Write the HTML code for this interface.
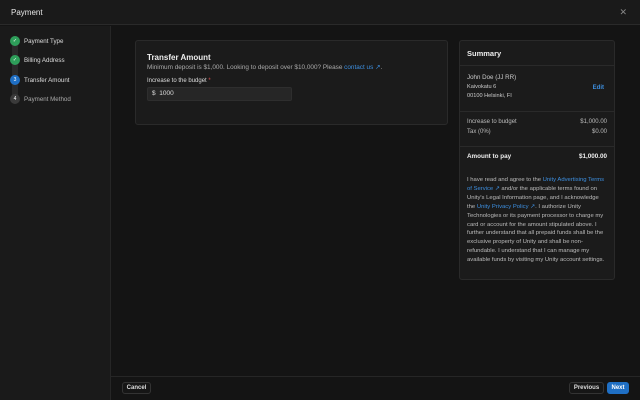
<html><head><style>
*{margin:0;padding:0;box-sizing:border-box}
body{width:640px;height:400px;background:#141414;font-family:"Liberation Sans",sans-serif;color:#ddd;position:relative;overflow:hidden;font-size:7px}
.hdr{position:absolute;left:0;top:0;width:640px;height:25px;background:#1a1a1a;border-bottom:1px solid #2a2a2a}
.hdr .t{position:absolute;left:11px;top:8px;font-size:8px;color:#e6e6e6}
.hdr .x{position:absolute;right:13px;top:7px;font-size:9px;color:#888}
.side{position:absolute;left:0;top:26px;width:111px;height:374px;background:#1a1a1a;border-right:1px solid #262626}
.rail{position:absolute;left:12px;top:38px;width:6px;height:64px;background:#2a2a2a;border-radius:3px}
.st{position:absolute;left:10px;width:100px;height:10px}
.st .c{position:absolute;left:0;top:0;width:10px;height:10px;border-radius:50%;font-size:5px;text-align:center;line-height:10px;color:#fff}
.st .l{position:absolute;left:14px;top:2px;font-size:6.2px;color:#ddd}
.card{position:absolute;background:#1b1b1b;border:1px solid #2a2a2a;border-radius:3px}
.a{color:#3d8fe0}
.foot{position:absolute;left:111px;top:376px;width:529px;height:1px;background:#262626}
.btn{position:absolute;top:382px;height:12px;border:1px solid #333;border-radius:3px;font-size:6px;font-weight:bold;line-height:10px;text-align:center;color:#ddd;background:#161616}
.row{position:absolute;left:7px;right:7px;font-size:6px;color:#bbb}
.row span{float:right}
.dv{position:absolute;left:0;right:0;height:1px;background:#2a2a2a}
</style></head><body>
<div class="hdr"><div class="t">Payment</div><div class="x">✕</div></div>
<div class="side"></div>
<div class="rail"></div>
<div class="st" style="top:36px"><div class="c" style="background:#2e9e5a">✓</div><div class="l">Payment Type</div></div>
<div class="st" style="top:55px"><div class="c" style="background:#2e9e5a">✓</div><div class="l">Billing Address</div></div>
<div class="st" style="top:75px"><div class="c" style="background:#1f6fc4">3</div><div class="l">Transfer Amount</div></div>
<div class="st" style="top:94px"><div class="c" style="background:#3a3a3a">4</div><div class="l" style="color:#aaa">Payment Method</div></div>

<div class="card" style="left:135px;top:40px;width:313px;height:85px">
<div style="position:absolute;left:11px;top:12px;font-size:8px;color:#eee;font-weight:bold">Transfer Amount</div>
<div style="position:absolute;left:11px;top:22px;font-size:6.4px;color:#aaa">Minimum deposit is $1,000. Looking to deposit over $10,000? Please <span class="a">contact us ↗</span>.</div>
<div style="position:absolute;left:11px;top:37px;font-size:6px;color:#ddd">Increase to the budget <span style="color:#e05050">*</span></div>
<div style="position:absolute;left:11px;top:46px;width:145px;height:14px;background:#262626;border:1px solid #2e2e2e;border-radius:2px;font-size:6.5px;line-height:12px;padding-left:4px;color:#ddd">$&nbsp; 1000</div>
</div>

<div class="card" style="left:459px;top:40px;width:156px;height:240px">
<div style="position:absolute;left:7px;top:8px;font-size:7.5px;color:#eee;font-weight:bold">Summary</div>
<div class="dv" style="top:24px"></div>
<div style="position:absolute;left:7px;top:32px;font-size:6.2px;color:#ccc;line-height:9.5px">John Doe (JJ RR)<br><span style="font-size:5.6px">Kaivokatu 6</span><br><span style="font-size:5.6px">00100 Helsinki, FI</span></div>
<div class="a" style="position:absolute;right:10px;top:44px;font-size:6px;font-weight:bold">Edit</div>
<div class="dv" style="top:70px"></div>
<div class="row" style="top:78px">Increase to budget<span>$1,000.00</span></div>
<div class="row" style="top:88px">Tax (0%)<span>$0.00</span></div>
<div class="dv" style="top:105px"></div>
<div class="row" style="top:112px;color:#eee;font-weight:bold;font-size:6.3px">Amount to pay<span>$1,000.00</span></div>
<div style="position:absolute;left:7px;right:9px;top:135px;font-size:5.9px;line-height:8.9px;color:#bbb">I have read and agree to the <span class="a">Unity Advertising Terms of Service ↗</span> and/or the applicable terms found on Unity's Legal Information page, and I acknowledge the <span class="a">Unity Privacy Policy ↗</span>. I authorize Unity Technologies or its payment processor to charge my card or account for the amount stipulated above. I further understand that all prepaid funds shall be the exclusive property of Unity and shall be non-refundable. I understand that I can manage my available funds by visiting my Unity account settings.</div>
</div>

<div class="foot"></div>
<div class="btn" style="left:122px;width:29px">Cancel</div>
<div class="btn" style="left:569px;width:35px">Previous</div>
<div class="btn" style="left:607px;width:22px;background:#1f6fc4;border-color:#1f6fc4;color:#fff">Next</div>
</body></html>
